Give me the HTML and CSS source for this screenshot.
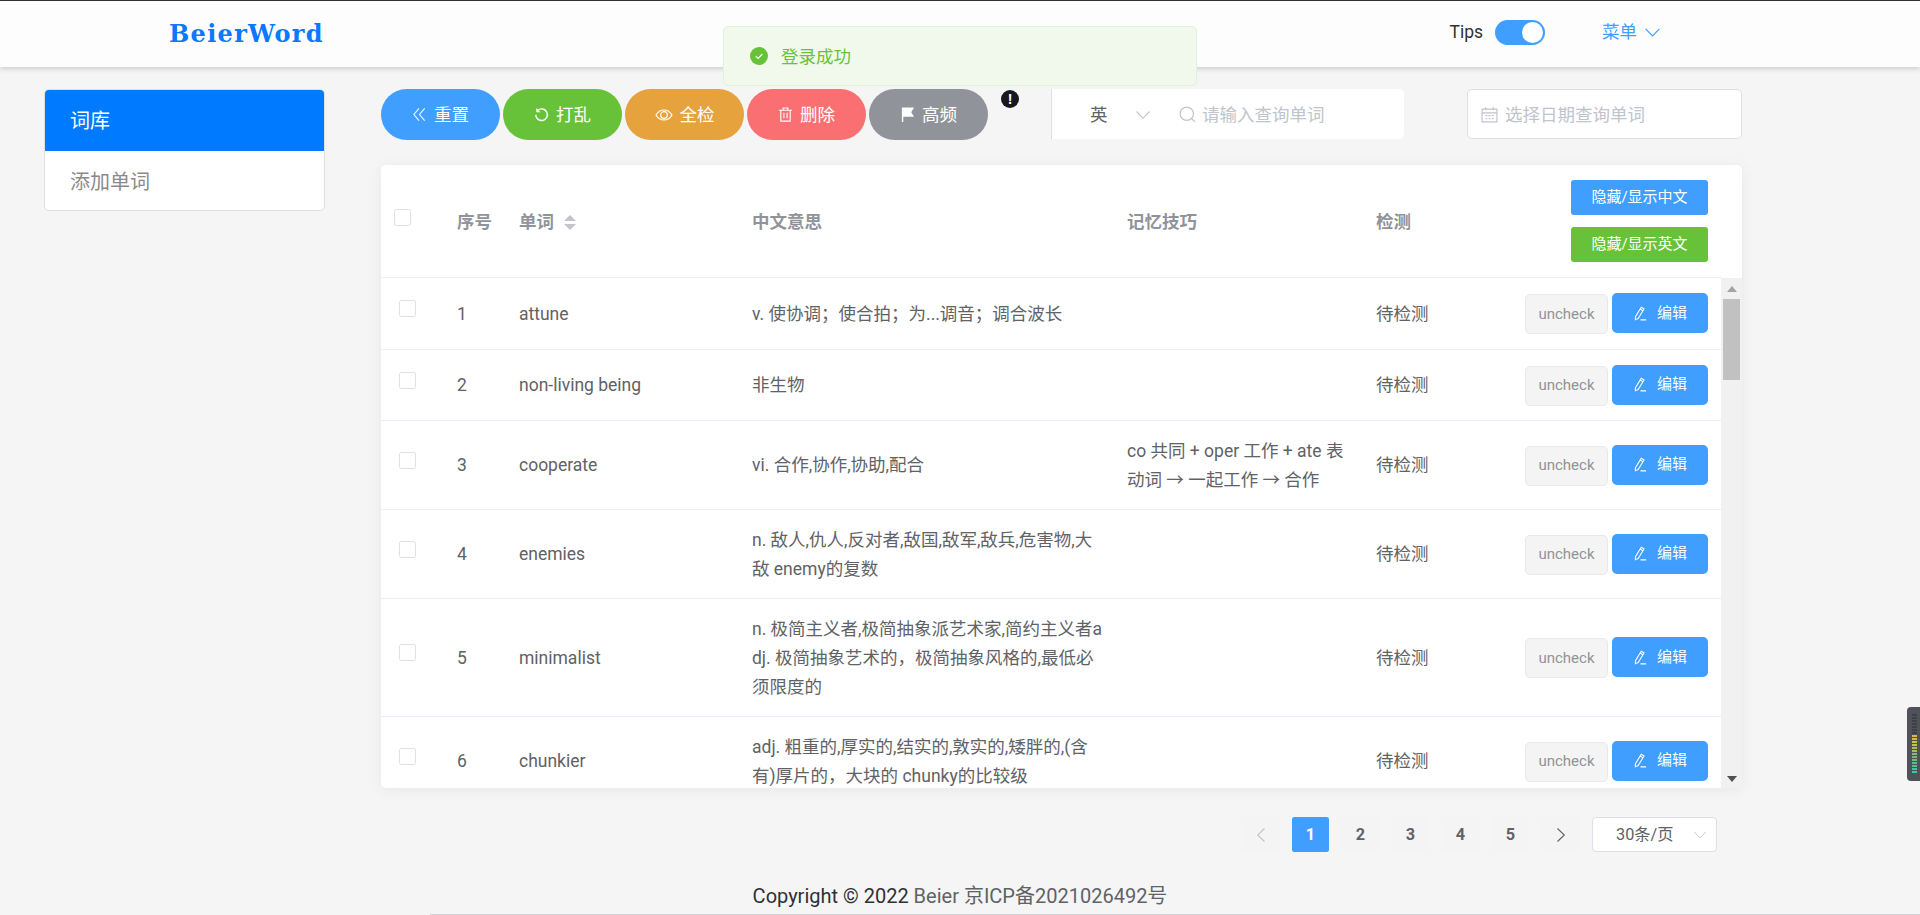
FILE: index.html
```html
<!DOCTYPE html>
<html lang="zh">
<head>
<meta charset="utf-8">
<title>BeierWord</title>
<link rel="stylesheet" href="styles.css">
</head>
<body>
<svg class="sprite" width="0" height="0" aria-hidden="true">
  <symbol id="i-edit" viewBox="0 0 16 16"><path d="M2.500 11.600 8.800 1.400l3 1.800-6.300 10.200-3 1.200z M7.600 3.200l3 1.800 M8 14.800h6" fill="none" stroke="currentColor" stroke-width="1.100"/></symbol>
  <symbol id="i-chev" viewBox="0 0 16 16"><path d="M1.500 4.500l6.500 6.800 6.500-6.800" fill="none" stroke="currentColor" stroke-width="1.100"/></symbol>
</svg>

<header class="topbar">
  <div class="logo">BeierWord</div>
  <div class="topbar-right">
    <span class="tips-label">Tips</span>
    <span class="switch"><span class="switch-knob"></span></span>
    <span class="menu-link">菜单<svg class="menu-chev"><use href="#i-chev"/></svg></span>
  </div>
</header>

<div class="toast">
  <svg class="toast-icon" viewBox="0 0 18 18"><circle cx="9" cy="9" r="9" fill="#67c23a"/><path d="M5.800 9.200l2.300 2.300 4.200-4.400" fill="none" stroke="#fff" stroke-width="1.200"/></svg>
  <span class="toast-text">登录成功</span>
</div>

<main class="layout">
  <nav class="side">
    <a class="side-item active">词库</a>
    <a class="side-item">添加单词</a>
  </nav>

  <section class="content">
    <div class="toolbar">
      <div class="pills">
        <button class="pill blue"><svg class="pill-icon" viewBox="0 0 16 16"><path d="M7.500 1.500 2 8l5.500 6.500M13.500 1.500 8 8l5.500 6.500" fill="none" stroke="currentColor" stroke-width="1.100"/></svg>重置</button>
        <button class="pill green"><svg class="pill-icon" viewBox="0 0 16 16"><path d="M4 3.600A6.200 6.200 0 1 1 1.900 8.400" fill="none" stroke="currentColor" stroke-width="1.500"/><path d="M2.400 1v4.600H7z" fill="currentColor"/></svg>打乱</button>
        <button class="pill orange"><svg class="pill-icon wide" viewBox="0 0 18 16"><path d="M1 8c2-3.400 5-5 8-5s6 1.600 8 5c-2 3.400-5 5-8 5S3 11.400 1 8z" fill="none" stroke="currentColor" stroke-width="1.200"/><circle cx="9" cy="8" r="3.300" fill="none" stroke="currentColor" stroke-width="1.200"/></svg>全检</button>
        <button class="pill red"><svg class="pill-icon" viewBox="0 0 16 16"><path d="M1 3.500h14M5.500 3.500V1h5v2.500M3 3.500V15h10V3.500M6.300 6v6M9.700 6v6" fill="none" stroke="currentColor" stroke-width="1.200"/></svg>删除</button>
        <button class="pill gray"><svg class="pill-icon" viewBox="0 0 16 16"><path d="M2 .5h13l-3 5 3 5H3.500V16H2z" fill="currentColor"/></svg>高频</button>
      </div>
      <span class="alert-dot">!</span>
      <div class="search">
        <span class="search-select">英<svg class="search-chev"><use href="#i-chev"/></svg></span>
        <svg class="search-icon" viewBox="0 0 16 16"><circle cx="7.300" cy="7.300" r="6.300" fill="none" stroke="currentColor" stroke-width="1.100"/><path d="M11.800 11.800 15 15" stroke="currentColor" stroke-width="1.100"/></svg>
        <span class="placeholder">请输入查询单词</span>
      </div>
      <div class="date">
        <svg class="date-icon" viewBox="0 0 16 16"><path d="M1 3h14v12H1z M1 6.500h14 M4.500 1v3 M11.500 1v3 M4 9h2 M7 9h2 M10 9h2 M4 12h2 M7 12h2 M10 12h2" fill="none" stroke="currentColor" stroke-width="1.100"/></svg>
        <span class="placeholder">选择日期查询单词</span>
      </div>
    </div>

    <div class="card">
      <table class="grid head">
        <colgroup><col class="c1"><col class="c2"><col class="c3"><col class="c4"><col class="c5"><col class="c6"><col class="c7"><col class="c8"></colgroup>
        <thead>
          <tr>
            <th class="check-head"><span class="box"></span></th>
            <th>序号</th>
            <th>单词<span class="carets"><i class="caret up"></i><i class="caret down"></i></span></th>
            <th class="wide-pad">中文意思</th>
            <th class="wide-pad">记忆技巧</th>
            <th class="wide-pad">检测</th>
            <th class="act">
              <button class="mini blue">隐藏/显示中文</button>
              <button class="mini green">隐藏/显示英文</button>
            </th>
            <th class="gutter"></th>
          </tr>
        </thead>
      </table>
      <div class="body-wrap">
        <div class="rows">
          <table class="grid">
            <colgroup><col class="c1"><col class="c2"><col class="c3"><col class="c4"><col class="c5"><col class="c6"><col class="c7"></colgroup>
            <tbody>
              <tr>
                <td class="check-cell"><span class="box"></span></td><td>1</td><td>attune</td>
                <td class="wide-pad">v. 使协调；使合拍；为...调音；调合波长</td><td class="wide-pad"></td><td class="wide-pad">待检测</td>
                <td class="act"><button class="uncheck">uncheck</button><button class="edit"><svg class="edit-icon"><use href="#i-edit"/></svg>编辑</button></td>
              </tr>
              <tr>
                <td class="check-cell"><span class="box"></span></td><td>2</td><td>non-living being</td>
                <td class="wide-pad">非生物</td><td class="wide-pad"></td><td class="wide-pad">待检测</td>
                <td class="act"><button class="uncheck">uncheck</button><button class="edit"><svg class="edit-icon"><use href="#i-edit"/></svg>编辑</button></td>
              </tr>
              <tr>
                <td class="check-cell"><span class="box"></span></td><td>3</td><td>cooperate</td>
                <td class="wide-pad">vi. 合作,协作,协助,配合</td><td class="wide-pad">co 共同 + oper 工作 + ate 表动词 → 一起工作 → 合作</td><td class="wide-pad">待检测</td>
                <td class="act"><button class="uncheck">uncheck</button><button class="edit"><svg class="edit-icon"><use href="#i-edit"/></svg>编辑</button></td>
              </tr>
              <tr>
                <td class="check-cell"><span class="box"></span></td><td>4</td><td>enemies</td>
                <td class="wide-pad">n. 敌人,仇人,反对者,敌国,敌军,敌兵,危害物,大敌 enemy的复数</td><td class="wide-pad"></td><td class="wide-pad">待检测</td>
                <td class="act"><button class="uncheck">uncheck</button><button class="edit"><svg class="edit-icon"><use href="#i-edit"/></svg>编辑</button></td>
              </tr>
              <tr>
                <td class="check-cell"><span class="box"></span></td><td>5</td><td>minimalist</td>
                <td class="wide-pad">n. 极简主义者,极简抽象派艺术家,简约主义者adj. 极简抽象艺术的，极简抽象风格的,最低必须限度的</td><td class="wide-pad"></td><td class="wide-pad">待检测</td>
                <td class="act"><button class="uncheck">uncheck</button><button class="edit"><svg class="edit-icon"><use href="#i-edit"/></svg>编辑</button></td>
              </tr>
              <tr>
                <td class="check-cell"><span class="box"></span></td><td>6</td><td>chunkier</td>
                <td class="wide-pad">adj. 粗重的,厚实的,结实的,敦实的,矮胖的,(含有)厚片的，大块的 chunky的比较级</td><td class="wide-pad"></td><td class="wide-pad">待检测</td>
                <td class="act"><button class="uncheck">uncheck</button><button class="edit"><svg class="edit-icon"><use href="#i-edit"/></svg>编辑</button></td>
              </tr>
            </tbody>
          </table>
        </div>
        <div class="scrollbar">
          <span class="arrow-up"></span>
          <span class="thumb"></span>
          <span class="arrow-down"></span>
        </div>
      </div>
    </div>

    <div class="pager">
      <span class="page muted"><svg class="page-chev prev"><use href="#i-chev"/></svg></span>
      <span class="page current">1</span>
      <span class="page">2</span>
      <span class="page">3</span>
      <span class="page">4</span>
      <span class="page">5</span>
      <span class="page"><svg class="page-chev next"><use href="#i-chev"/></svg></span>
      <span class="size">30条/页<svg class="size-chev"><use href="#i-chev"/></svg></span>
    </div>
  </section>
</main>

<footer class="foot"><span class="foot-dark">Copyright © 2022</span> Beier 京ICP备2021026492号</footer>

<div class="meter">
  <i class="m off"></i><i class="m off"></i><i class="m off"></i><i class="m off"></i><i class="m off"></i><i class="m off"></i><i class="m off"></i>
  <i class="m y1"></i><i class="m y1"></i><i class="m y2"></i><i class="m y2"></i><i class="m y3"></i><i class="m y3"></i><i class="m y4"></i><i class="m g1"></i><i class="m g1"></i><i class="m g2"></i><i class="m g2"></i><i class="m g3"></i><i class="m g3"></i>
</div>
</body>
</html>
```
FILE: styles.css
```css
* { box-sizing: border-box; }
html, body { margin: 0; height: 100%; }
body {
  background: #f5f5f5;
  color: #606266;
  font: 17.5px/28.75px Roboto, "Noto Sans CJK SC", sans-serif;
  display: flex;
  flex-direction: column;
  height: 915px;
  overflow: hidden;
}
.sprite { position: absolute; }
button { font: inherit; border: 0; cursor: pointer; }

/* top bar */
.topbar {
  flex: none;
  height: 67px;
  border-top: 1px solid #303133;
  background: #fdfdfd;
  box-shadow: 0 2px 5px rgba(0, 0, 0, .16);
  display: flex;
  align-items: center;
  justify-content: space-between;
  position: relative;
  padding: 0 0 1px 169px;
}
.logo {
  font: bold 24px/30px "DejaVu Serif", serif;
  color: #0a78ff;
  letter-spacing: 1.3px;
}
.topbar-right {
  display: flex;
  align-items: center;
  padding-right: 259px;
  margin-top: -2px;
}
.tips-label { color: #303133; margin-right: 12px; }
.switch {
  width: 50px;
  height: 25px;
  border-radius: 13px;
  background: #409eff;
  position: relative;
  margin-right: 57px;
}
.switch-knob {
  position: absolute;
  top: 2px;
  right: 2px;
  width: 21px;
  height: 21px;
  border-radius: 50%;
  background: #fff;
}
.menu-link { color: #409eff; display: flex; align-items: center; }
.menu-chev { width: 17px; height: 17px; margin-left: 7px; }

/* toast */
.toast {
  position: absolute;
  left: 723px;
  top: 26px;
  width: 474px;
  height: 60px;
  background: #f0f9eb;
  border: 1px solid #e1f3d8;
  border-radius: 5px;
  color: #67c23a;
  display: flex;
  align-items: center;
  padding-left: 26px;
  gap: 13px;
  z-index: 5;
}
.toast-icon { width: 18px; height: 18px; }
.toast-text { padding-top: 2px; }

/* layout */
.layout { flex: none; display: flex; padding: 22px 0 0 44px; }
.side {
  flex: none;
  width: 281px;
  height: 122px;
  margin-right: 56px;
  font-size: 20px;
  background: #fff;
  border: 1px solid #dfdfdf;
  border-radius: 5px;
  overflow: hidden;
}
.side-item {
  display: flex;
  align-items: center;
  height: 60px;
  padding: 2px 0 0 25px;
  color: #8a8a8a;
}
.side-item.active {
  background: #007bff;
  color: #fff;
  margin: -1px -1px 0;
  padding-left: 26px;
  height: 62px;
}
.content { flex: none; width: 1361px; }

/* toolbar */
.toolbar { display: flex; align-items: flex-start; height: 51px; }
.pills { display: flex; gap: 3px; }
.pill {
  width: 119px;
  height: 51px;
  border-radius: 25.5px;
  color: #fff;
  display: flex;
  align-items: center;
  justify-content: center;
  gap: 7px;
  padding: 2px 0 0;
}
.pill-icon { width: 15px; height: 15px; margin-top: -2px; }
.pill-icon.wide { width: 18px; height: 16px; }
.pill.blue, .mini.blue { background: #409eff; }
.pill.green, .mini.green { background: #67c23a; }
.pill.orange { background: #e6a23c; }
.pill.red { background: #f96f72; }
.pill.gray { background: #909399; }
.alert-dot {
  width: 18px;
  height: 18px;
  margin: 1px 32px 0 13px;
  border-radius: 50%;
  background: #16181d;
  color: #fff;
  font: bold 14px/18px "Liberation Sans", sans-serif;
  text-align: center;
}
.search {
  width: 353px;
  height: 50px;
  background: #fff;
  border-left: 1px solid #dcdfe6;
  border-radius: 0 5px 5px 0;
  display: flex;
  align-items: center;
}
.search-select {
  width: 127px;
  padding-left: 38px;
  display: flex;
  align-items: center;
  gap: 27px;
  flex: none;
  padding-top: 2px;
}
.search-chev { width: 16px; height: 16px; color: #c0c4cc; }
.search-icon { width: 17px; height: 17px; color: #c0c4cc; margin-right: 6px; }
.placeholder { color: #c0c4cc; padding-top: 2px; }
.date {
  width: 275px;
  height: 50px;
  margin-left: 63px;
  background: #fff;
  border: 1px solid #dcdfe6;
  border-radius: 5px;
  display: flex;
  align-items: center;
  padding-left: 13px;
  gap: 7px;
}
.date-icon { width: 17px; height: 17px; color: #c0c4cc; }

/* table */
.card {
  margin-top: 25px;
  height: 623px;
  background: #fff;
  border-radius: 5px;
  box-shadow: 0 2px 15px rgba(0, 0, 0, .06);
  overflow: hidden;
}
.grid { border-collapse: collapse; table-layout: fixed; width: 100%; }
.head { height: 113px; }
.c1 { width: 64px; }
.c2 { width: 62px; }
.c3 { width: 230px; }
.c4 { width: 375px; }
.c5 { width: 249px; }
.c6 { width: 149px; }
.c7 { width: 211px; }
.c8 { width: 21px; }
th {
  padding: 2px 0 0 12px;
  text-align: left;
  color: #909399;
  font-weight: 700;
  border-bottom: 1px solid #ebeef5;
}
th.gutter { border-bottom: 0; padding: 0; }
th.check-head { padding: 0 0 8px 13px; }
td {
  padding: 16px 8px 14.5px 12px;
  vertical-align: middle;
  border-bottom: 1px solid #ebeef5;
  word-break: break-all;
}
td.wide-pad, th.wide-pad { padding-left: 15px; }
td.check-cell { padding: 13px 0 22.5px 18px; }
.box {
  display: block;
  width: 17px;
  height: 17px;
  background: #fff;
  border: 1px solid #dcdfe6;
  border-radius: 2.5px;
}
.carets {
  display: inline-flex;
  flex-direction: column;
  gap: 3px;
  margin-left: 10px;
  vertical-align: 7px;
}
.caret { width: 0; height: 0; border: 6px solid transparent; }
.caret.up { border-top: 0; border-bottom: 6px solid #c0c4cc; }
.caret.down { border-bottom: 0; border-top: 6px solid #c0c4cc; }
th.act { padding: 0 13px 1px 0; text-align: right; }
.mini {
  display: block;
  margin: 12px 0 12px auto;
  width: 137px;
  height: 35px;
  border-radius: 3px;
  color: #fff;
  font-size: 15px;
  font-weight: 400;
  padding: 0;
}
td.act {
  padding: 15px 13px 15.5px 0;
  text-align: right;
  white-space: nowrap;
}
.uncheck {
  width: 83px;
  height: 40px;
  margin: 0 4px 0 0;
  transform: translateY(1px);
  background: #f4f4f5;
  border: 1px solid #e9e9eb;
  border-radius: 5px;
  color: #909399;
  font-size: 15px;
  padding: 0;
  vertical-align: top;
}
.edit {
  width: 96px;
  height: 40px;
  background: #409eff;
  border-radius: 5px;
  color: #fff;
  font-size: 15px;
  padding: 0;
  display: inline-flex;
  align-items: center;
  justify-content: center;
  gap: 9px;
  vertical-align: top;
}
.edit-icon { width: 15px; height: 17px; }
.body-wrap { display: flex; height: 510px; }
.rows { flex: none; width: 1340px; overflow: hidden; }
.scrollbar {
  flex: none;
  width: 21px;
  background: #f1f1f1;
  display: flex;
  flex-direction: column;
  align-items: center;
  position: relative;
  padding-top: 8px;
}
.arrow-up {
  width: 0; height: 0;
  border: 5px solid transparent;
  border-top: 0;
  border-bottom: 6px solid #a3a3a3;
}
.thumb { width: 17px; height: 81px; margin-top: 7px; background: #c1c1c1; }
.arrow-down {
  position: absolute;
  bottom: 6px;
  width: 0; height: 0;
  border: 5px solid transparent;
  border-bottom: 0;
  border-top: 6px solid #505050;
}

/* pager */
.pager {
  display: flex;
  justify-content: flex-end;
  gap: 13px;
  margin-top: 29px;
  padding-right: 25px;
}
.page {
  width: 37px;
  height: 35px;
  background: #f4f4f5;
  border-radius: 2.5px;
  color: #606266;
  font-size: 16.25px;
  font-weight: 700;
  line-height: 35px;
  text-align: center;
  display: flex;
  align-items: center;
  justify-content: center;
}
.page.current { background: #409eff; color: #fff; }
.page.muted { color: #c0c4cc; }
.page-chev { width: 16px; height: 16px; }
.page-chev.prev { transform: rotate(90deg); }
.page-chev.next { transform: rotate(-90deg); }
.size {
  width: 125px;
  height: 35px;
  background: #fff;
  border: 1px solid #dcdfe6;
  border-radius: 4px;
  font-size: 16.25px;
  line-height: 33px;
  padding-left: 23px;
  display: flex;
  align-items: center;
  justify-content: space-between;
  padding-right: 9px;
}
.size-chev { width: 14px; height: 14px; color: #c0c4cc; }

/* footer */
.foot {
  margin: auto 0 0 430px;
  padding: 0 430px 4px 0;
  height: 33px;
  border-bottom: 1px solid #d4d4d8;
  text-align: center;
  font-size: 20px;
  line-height: 28px;
  white-space: nowrap;
}
.foot-dark { color: #303133; }

/* floating meter */
.meter {
  position: absolute;
  right: 0;
  top: 707px;
  width: 13px;
  height: 74px;
  background: #4f5259;
  border-radius: 4px 0 0 4px;
  padding: 7px 3px 0 5px;
  display: flex;
  flex-direction: column;
  gap: 1px;
}
.m { display: block; height: 2px; flex: none; }
.m.off { background: #3d4046; }
.y1 { background: #d9b847; }
.y2 { background: #c9c052; }
.y3 { background: #a9bd5f; }
.y4 { background: #8dbb6b; }
.g1 { background: #6fba7c; }
.g2 { background: #56bd90; }
.g3 { background: #44c4a5; }
```
